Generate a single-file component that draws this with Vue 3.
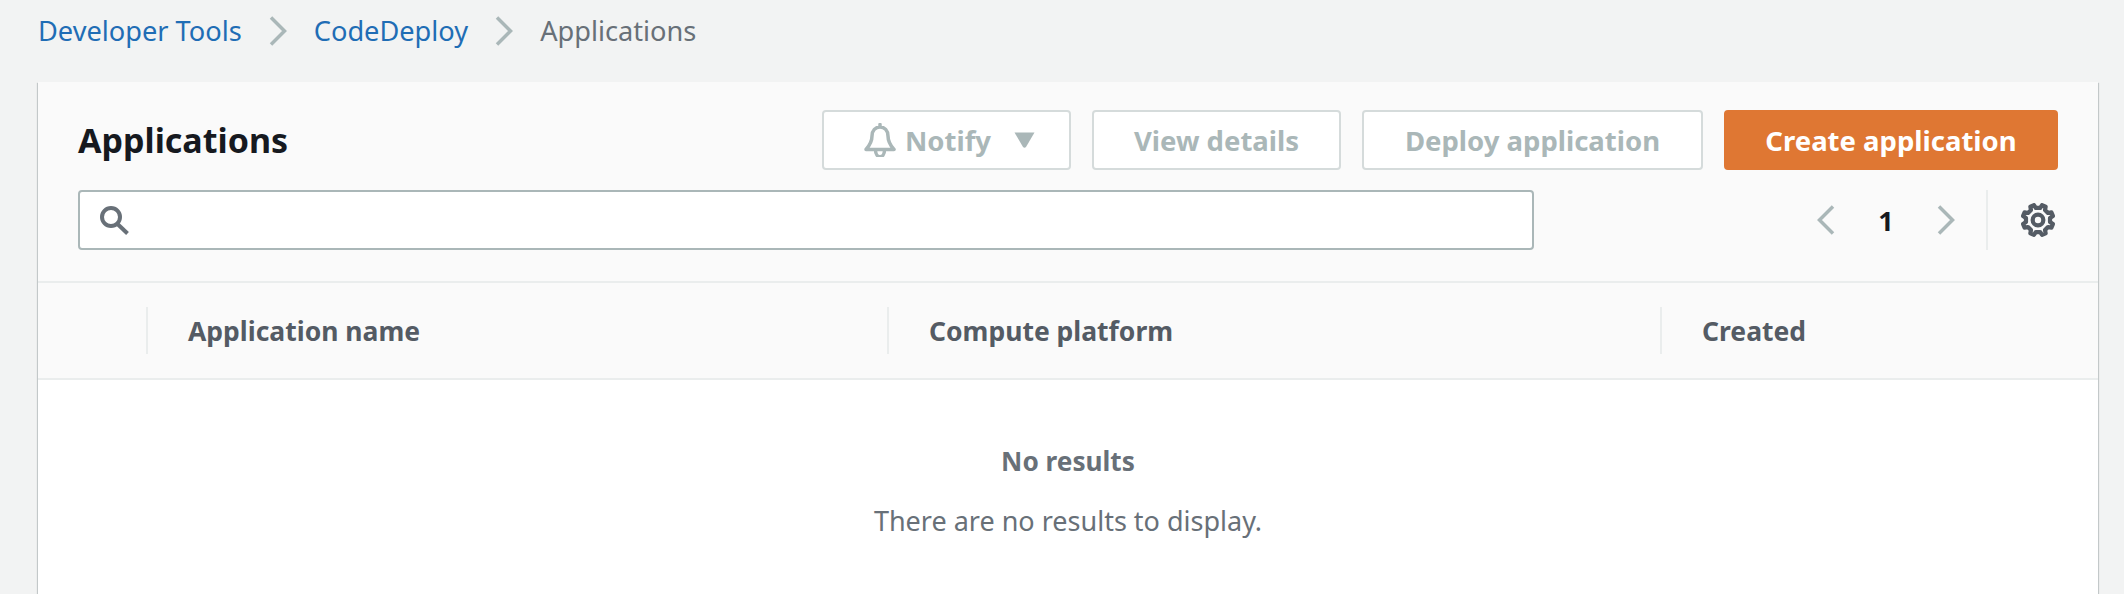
<template>
  <div class="page">
    <nav class="crumbs">
      <a class="crumb-link">Developer Tools</a>
      <svg class="crumb-sep" viewBox="0 0 18 30"><path d="M2 1.5 L15.5 15 L2 28.5" /></svg>
      <a class="crumb-link">CodeDeploy</a>
      <svg class="crumb-sep" viewBox="0 0 18 30"><path d="M2 1.5 L15.5 15 L2 28.5" /></svg>
      <span class="crumb-current">Applications</span>
    </nav>

    <section class="card">
      <header class="card-head">
        <div class="title-row">
          <h1 class="title">Applications</h1>
          <div class="actions">
            <button class="btn btn-notify" disabled>
              <svg class="bell" viewBox="0 0 32 34">
                <path d="M16 1.5 V4 M2 26.5 C6 22 8 18 8 13 C8 7.5 11.5 4 16 4 C20.5 4 24 7.5 24 13 C24 18 26 22 30 26.5 Z M11.5 27 C11.5 36 20.5 36 20.5 27" />
              </svg>
              <span>Notify</span>
              <svg class="caret" viewBox="0 0 21 16"><path d="M0.5 0.5 H20.5 L12 15 Q10.5 16.5 9 15 Z" /></svg>
            </button>
            <button class="btn btn-details" disabled>View details</button>
            <button class="btn btn-deploy" disabled>Deploy application</button>
            <button class="btn btn-create">Create application</button>
          </div>
        </div>
        <div class="tool-row">
          <div class="search">
            <svg class="search-icon" viewBox="0 0 30 30">
              <circle cx="11" cy="12" r="9" />
              <path d="M17.5 19 L27.5 28.5" />
            </svg>
          </div>
          <div class="pager">
            <svg class="chev" viewBox="0 0 18 30"><path d="M16 1.5 L2.5 15 L16 28.5" /></svg>
            <span class="page-num">1</span>
            <svg class="chev" viewBox="0 0 18 30"><path d="M2 1.5 L15.5 15 L2 28.5" /></svg>
          </div>
          <div class="settings">
            <svg class="gear" viewBox="0 0 32 32">
              <path :d="gearPath" />
              <circle cx="16" cy="16" r="5" />
            </svg>
          </div>
        </div>
      </header>

      <div class="table-head">
        <div v-for="col in columns" :key="col" class="th">
          <span v-if="col" class="th-label">{{ col }}</span>
        </div>
      </div>

      <div class="empty">
        <p class="empty-title">No results</p>
        <p class="empty-text">There are no results to display.</p>
      </div>
    </section>
  </div>
</template>

<script setup>
const columns = ['', 'Application name', 'Compute platform', 'Created']

// eight tooth outline for the preferences icon
const gearPath = (() => {
  const pts = []
  for (let i = 0; i < 8; i++) {
    const a = (i * Math.PI) / 4 - Math.PI / 8
    const step = Math.PI / 4
    const at = (r, t) => `${(16 + r * Math.cos(t)).toFixed(2)} ${(16 + r * Math.sin(t)).toFixed(2)}`
    pts.push(`${i === 0 ? 'M' : 'L'}${at(11.5, a - step * 0.28)}`)
    pts.push(`L${at(14.5, a - step * 0.16)}`)
    pts.push(`L${at(14.5, a + step * 0.16)}`)
    pts.push(`L${at(11.5, a + step * 0.28)}`)
  }
  return pts.join(' ') + ' Z'
})()
</script>

<style>
html,
body {
  margin: 0;
  background: #f2f3f3;
}
</style>

<style scoped>
.page {
  height: 594px;
  overflow: hidden;
  background: #f2f3f3;
  font-family: 'Noto Sans', 'Liberation Sans', sans-serif;
}

.crumbs {
  height: 61px;
  padding: 0 0 0 38px;
  display: flex;
  align-items: center;
  font-size: 27.2px;
}

.crumb-link {
  color: #1f6db5;
}

.crumb-current {
  color: #687078;
}

.crumb-sep {
  width: 18px;
  height: 30px;
  margin: 0 27px;
  fill: none;
  stroke: #aab7b8;
  stroke-width: 3.5;
}

.card {
  margin: 21px 26px 0 38px;
  height: 520px;
  background: #fff;
  box-shadow: 0 1px 1px 0 rgba(0, 28, 36, 0.3), 1px 1px 1px 0 rgba(0, 28, 36, 0.15), -1px 1px 1px 0 rgba(0, 28, 36, 0.15);
}

.card-head {
  background: #fafafa;
  padding: 28px 40px 31px 40px;
  border-bottom: 2px solid #eaeded;
}

.title-row {
  display: flex;
  justify-content: space-between;
  align-items: center;
  height: 60px;
}

.title {
  margin: 0;
  font-size: 34px;
  font-weight: 700;
  color: #16191f;
}

.actions {
  display: flex;
  gap: 21px;
}

.btn {
  height: 60px;
  box-sizing: border-box;
  border: 2px solid #d5dbdb;
  border-radius: 4px;
  background: #fff;
  color: #aab7b8;
  font-family: inherit;
  font-size: 27.5px;
  font-weight: 700;
  padding: 0;
}

.btn-notify {
  width: 249px;
  display: flex;
  align-items: center;
  padding-left: 40px;
}

.bell {
  width: 32px;
  height: 34px;
  margin-right: 9px;
  fill: none;
  stroke: #aab7b8;
  stroke-width: 3.5;
  stroke-linejoin: round;
  stroke-linecap: round;
}

.caret {
  width: 21px;
  height: 16px;
  margin-left: 23px;
  fill: #aab7b8;
}

.btn-details {
  width: 249px;
}

.btn-deploy {
  width: 341px;
}

.btn-create {
  width: 334px;
  border-color: #df7733;
  background: #df7733;
  color: #fff;
}

.tool-row {
  display: flex;
  align-items: center;
  margin-top: 20px;
  height: 60px;
}

.search {
  width: 1456px;
  height: 60px;
  box-sizing: border-box;
  border: 2px solid #aab7b8;
  border-radius: 4px;
  background: #fff;
  display: flex;
  align-items: center;
  padding-left: 20px;
}

.search-icon {
  width: 30px;
  height: 30px;
  fill: none;
  stroke: #687078;
  stroke-width: 4;
}

.pager {
  margin-left: 283px;
  width: 138px;
  display: flex;
  align-items: center;
  justify-content: space-between;
}

.chev {
  width: 18px;
  height: 30px;
  fill: none;
  stroke: #aab7b8;
  stroke-width: 3.5;
}

.page-num {
  font-size: 27px;
  font-weight: 700;
  color: #16191f;
}

.settings {
  margin-left: 31px;
  height: 60px;
  border-left: 2px solid #eaeded;
  padding-left: 33px;
  display: flex;
  align-items: center;
}

.gear {
  width: 34px;
  height: 34px;
  fill: none;
  stroke: #545b64;
  stroke-width: 4;
  stroke-linejoin: round;
}

.table-head {
  display: grid;
  grid-template-columns: 108px 741px 773px 1fr;
  height: 95px;
  align-items: center;
  background: #fafafa;
  border-bottom: 2px solid #eaeded;
}

.th {
  height: 47px;
  display: flex;
  align-items: center;
  padding-left: 40px;
  box-sizing: border-box;
  border-left: 2px solid #eaeded;
}

.th:first-child {
  border-left: none;
}

.th-label {
  font-size: 26.5px;
  font-weight: 700;
  color: #545b64;
}

.empty {
  text-align: center;
  color: #687078;
  font-size: 27px;
  padding-top: 63px;
}

.empty-title {
  margin: 0;
  font-size: 26.2px;
  font-weight: 700;
  line-height: 36px;
}

.empty-text {
  margin: 24px 0 0;
  line-height: 36px;
}
</style>
